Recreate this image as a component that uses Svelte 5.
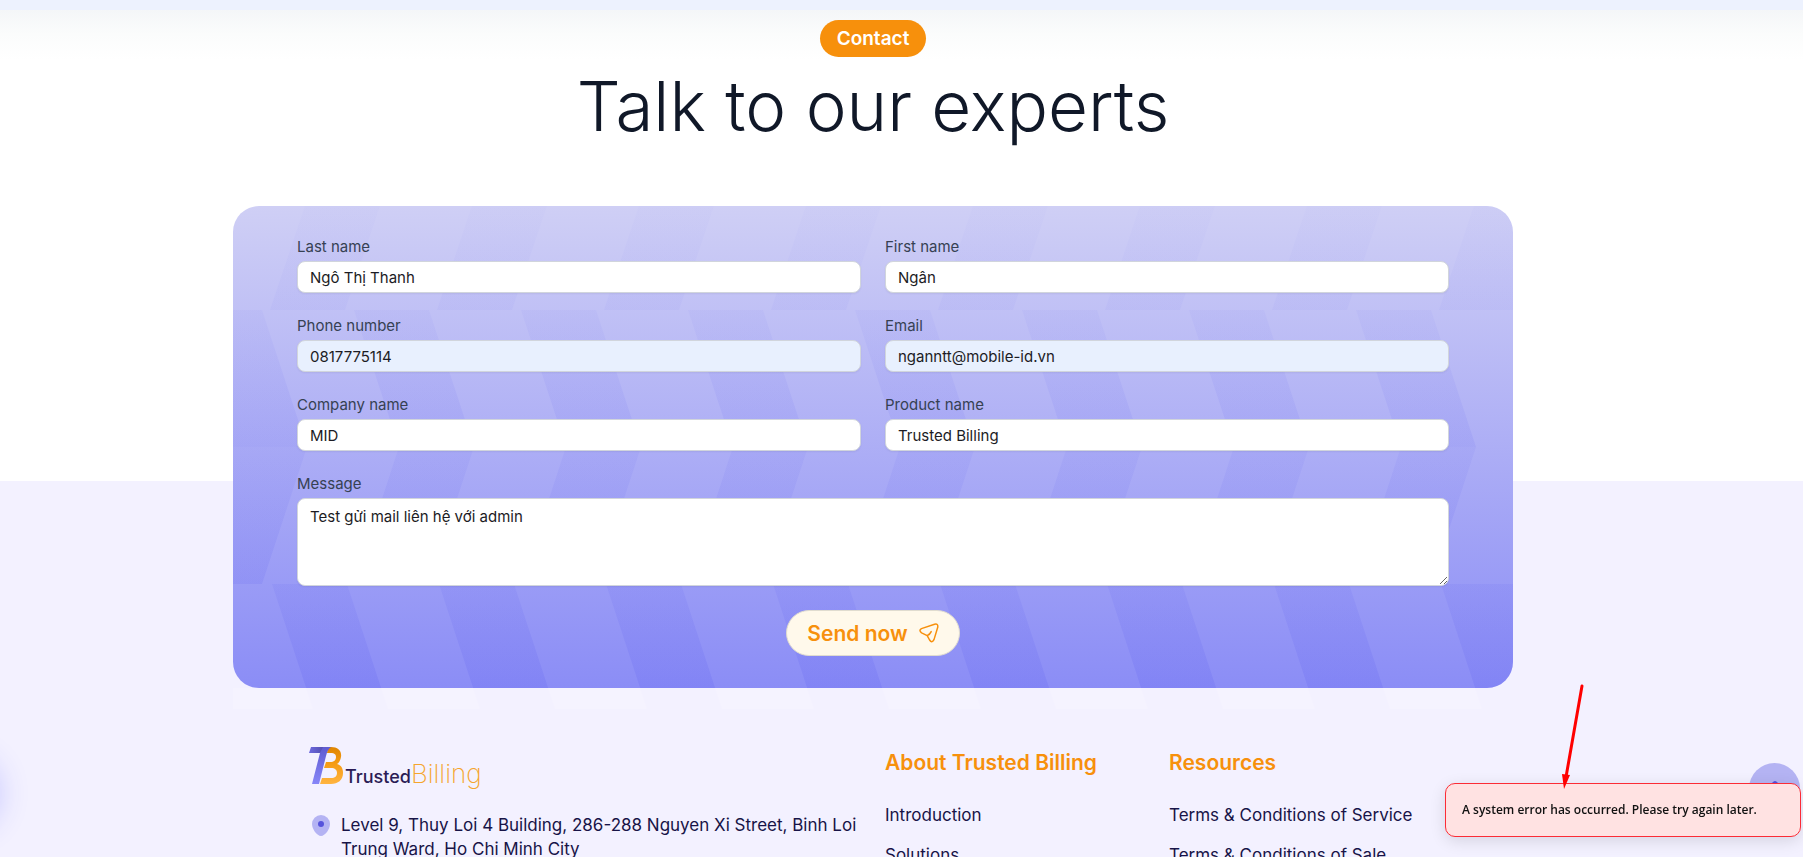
<script>
	let form = $state({
		lastName: 'Ngô Thị Thanh',
		firstName: 'Ngân',
		phone: '0817775114',
		email: 'nganntt@mobile-id.vn',
		company: 'MID',
		product: 'Trusted Billing',
		message: 'Test gửi mail liên hệ với admin'
	});

	let error = $state('A system error has occurred. Please try again later.');

	const fields = [
		{ key: 'lastName', label: 'Last name', type: 'text' },
		{ key: 'firstName', label: 'First name', type: 'text' },
		{ key: 'phone', label: 'Phone number', type: 'tel', filled: true },
		{ key: 'email', label: 'Email', type: 'email', filled: true },
		{ key: 'company', label: 'Company name', type: 'text' },
		{ key: 'product', label: 'Product name', type: 'text' }
	];

	const columns = [
		{ title: 'About Trusted Billing', links: ['Introduction', 'Solutions'] },
		{ title: 'Resources', links: ['Terms & Conditions of Service', 'Terms & Conditions of Sale'] }
	];

	// chevron bands behind the form: top edge, x of the first stripe at the top, lean, opacity range
	const bands = [
		{ y: -33, x: -84, lean: -46, from: 0.01, to: 0.05 },
		{ y: 104, x: -46, lean: 45, from: 0.05, to: 0.12 },
		{ y: 241, x: -1, lean: -45, from: 0.08, to: 0.16 },
		{ y: 378, x: -128, lean: 45, from: 0.12, to: 0.26 }
	];
	const stripes = [0, 1, 2, 3, 4, 5, 6, 7, 8, 9];

	function stripe(band, i) {
		const x = band.x + i * 167;
		const end = x + band.lean;
		return `${x},${band.y} ${x + 75},${band.y} ${end + 75},${band.y + 137} ${end},${band.y + 137}`;
	}

	function tail(i) {
		const x = i * 167 - 19;
		return `${x},0 ${x + 92},0 ${x + 99},21 ${x + 7},21`;
	}

	function handleSubmit(event) {
		event.preventDefault();
		error = 'A system error has occurred. Please try again later.';
	}
</script>

<div class="page">
	<main class="contact">
		<header class="intro">
			<span class="badge">Contact</span>
			<h1>Talk to our experts</h1>
		</header>

		<form class="card" onsubmit={handleSubmit}>
			<svg class="pattern" width="1280" height="483" viewBox="0 0 1280 483" aria-hidden="true">
				<defs>
					{#each bands as band, n}
						<linearGradient id="band-{n}" x1="0" y1="0" x2="0" y2="1">
							<stop offset="0" stop-color="#6466f1" stop-opacity={band.from} />
							<stop offset="1" stop-color="#6466f1" stop-opacity={band.to} />
						</linearGradient>
					{/each}
				</defs>
				{#each bands as band, n}
					{#each stripes as i}
						<polygon points={stripe(band, i)} fill="url(#band-{n})" />
					{/each}
				{/each}
			</svg>

			<div class="fields">
				{#each fields as field}
					<div class="field">
						<label for={field.key}>{field.label}</label>
						<input
							id={field.key}
							type={field.type}
							class:filled={field.filled}
							bind:value={form[field.key]}
						/>
					</div>
				{/each}
				<div class="field wide">
					<label for="message">Message</label>
					<textarea id="message" bind:value={form.message}></textarea>
				</div>
			</div>

			<button type="submit" class="send">
				Send now
				<svg width="20" height="20" viewBox="0 0 20 20" fill="none" aria-hidden="true">
					<path
						d="M2.400 5.600 15.600 1.300Q19.200 .4 18.800 4L15 16.600Q12.800 20.600 10.600 17L8.200 12.600 2.600 9.800Q-.6 7.400 2.400 5.600ZM8.200 12.600Q11 11.400 12.200 8.600"
						stroke="currentColor"
						stroke-width="1.500"
						stroke-linecap="round"
						stroke-linejoin="round"
					/>
				</svg>
			</button>
		</form>
	</main>

	<footer>
		<div class="glow"></div>
		<svg class="tails" viewBox="0 0 1280 21" preserveAspectRatio="xMinYMin slice" aria-hidden="true">
			{#each stripes as i}
				<polygon points={tail(i)} fill="#f5f3ff" />
			{/each}
		</svg>
		<div class="footer-grid">
			<div class="brand">
				<a class="logo" href="/" aria-label="Trusted Billing">
					<svg width="36" height="37" viewBox="0 0 36 37" aria-hidden="true">
						<defs>
							<linearGradient id="logo-t" x1="0" y1="0" x2="0" y2="1">
								<stop offset="0" stop-color="#5f5bd0" />
								<stop offset="1" stop-color="#8686f8" />
							</linearGradient>
							<linearGradient id="logo-bar" x1="0" y1="0" x2="1" y2="0">
								<stop offset="0" stop-color="#6d69df" />
								<stop offset="1" stop-color="#4d49a8" />
							</linearGradient>
							<linearGradient id="logo-b" x1="0" y1="0" x2="0" y2="1">
								<stop offset="0" stop-color="#df8500" />
								<stop offset="0.450" stop-color="#f59b14" />
								<stop offset="1" stop-color="#ffb440" />
							</linearGradient>
						</defs>
						<path
							d="M19 0H22C29 0 33 4 32 10 31.500 13 30 16 28 17 32 18 34 21 34 26 34 33 29 37 22 37H11L13 31H22C26 31 28 29 28 26 28 23 26 21 22 21H15L17 15H21C25 15 27 13 27 10 27 7 25 6 22 6H18Z"
							fill="url(#logo-b)"
						/>
						<path d="M2 0H17L15 6H0Z" fill="url(#logo-bar)" />
						<path d="M14 0H22C19 2 18 5 17 9L10 37H3L11 6Z" fill="url(#logo-t)" />
					</svg>
					<span class="wordmark"><span class="trusted">Trusted</span><span class="billing">Billing</span></span>
				</a>
				<address>
					<svg width="18" height="21" viewBox="0 0 18 21" aria-hidden="true">
						<path d="M9 0A9 9 0 0 1 18 9C18 14 13 21 9 21S0 14 0 9A9 9 0 0 1 9 0Z" fill="#b4b3f3" />
						<circle cx="9" cy="9" r="3" fill="#5653dc" />
					</svg>
					<span>Level 9, Thuy Loi 4 Building, 286-288 Nguyen Xi Street, Binh Loi<br />Trung Ward, Ho Chi Minh City</span>
				</address>
			</div>
			{#each columns as column}
				<nav>
					<h2>{column.title}</h2>
					<ul>
						{#each column.links as link}
							<li><a href="/">{link}</a></li>
						{/each}
					</ul>
				</nav>
			{/each}
		</div>
	</footer>
</div>

<button class="to-top" aria-label="Back to top">
	<svg width="18" height="18" viewBox="0 0 18 18" fill="none" aria-hidden="true">
		<path d="M9 17V3M2 9l7-6 7 6" stroke="#5653dc" stroke-width="4" stroke-linecap="round" stroke-linejoin="round" />
	</svg>
</button>

{#if error}
	<div class="toast" role="alert">{error}</div>
{/if}

<svg class="pointer" width="32" height="108" viewBox="0 0 32 108" aria-hidden="true">
	<path d="M24 3 8 94" stroke="#ff0000" stroke-width="3" stroke-linecap="round" />
	<path d="M4 91 12 92 6 106Z" fill="#ff0000" />
</svg>

<style>
	:global(html) {
		scrollbar-width: none;
	}

	:global(body) {
		margin: 0;
	}

	.page {
		overflow: hidden;
		font-family: Inter, 'Open Sans', sans-serif;
		color: #101828;
	}

	.contact {
		box-sizing: border-box;
		padding: 20px 57px 0 0;
		background: linear-gradient(#edf2fe 10px, #f4f6f8 10px, #fbfcfc 34px, #ffffff 60px);
	}

	.intro {
		display: flex;
		flex-direction: column;
		align-items: center;
	}

	.badge {
		padding: 0 17px;
		border-radius: 19px;
		background: #f7900c;
		color: #ffffff;
		font-size: 19px;
		font-weight: 600;
		line-height: 37px;
	}

	h1 {
		margin: 9px 0 60px;
		font-size: 69px;
		font-weight: 300;
		line-height: 80px;
	}

	.card {
		position: relative;
		z-index: 1;
		box-sizing: border-box;
		display: flex;
		flex-direction: column;
		align-items: center;
		gap: 24px;
		max-width: 1280px;
		margin: 0 auto -207px;
		padding: 31px 64px 32px;
		overflow: hidden;
		border-radius: 26px;
		background: linear-gradient(#cfcff5, #8b8df6);
	}

	.pattern {
		position: absolute;
		top: 0;
		left: 0;
	}

	.fields {
		position: relative;
		display: grid;
		grid-template-columns: 1fr 1fr;
		gap: 23px 24px;
		width: 100%;
	}

	.field {
		display: flex;
		flex-direction: column;
		gap: 4px;
	}

	.wide {
		grid-column: 1 / -1;
	}

	label {
		color: #364153;
		font-size: 15px;
		line-height: 20px;
	}

	input,
	textarea {
		box-sizing: border-box;
		width: 100%;
		margin: 0;
		padding: 0 12px;
		border: 1px solid #d1d5dc;
		border-radius: 8px;
		background: #ffffff;
		box-shadow: 0 1px 2px rgba(0, 0, 0, 0.06);
		color: #1c1c24;
		font-family: inherit;
		font-size: 15px;
		line-height: 20px;
	}

	input {
		height: 32px;
	}

	textarea {
		display: block;
		height: 88px;
		padding: 8px 12px;
	}

	.filled {
		background: #e8f0fe;
	}

	.send {
		position: relative;
		display: flex;
		align-items: center;
		gap: 11px;
		height: 46px;
		padding: 0 20px;
		border: 1px solid #e0dccf;
		border-radius: 23px;
		background: #fff9eb;
		color: #f7900c;
		font-family: inherit;
		font-size: 21px;
		font-weight: 600;
	}

	footer {
		position: relative;
		padding: 207px 57px 40px 0;
		background: #f3f1ff;
	}

	.glow {
		position: absolute;
		top: 280px;
		left: -70px;
		width: 64px;
		height: 64px;
		border-radius: 50%;
		box-shadow: 0 0 32px 4px #c0c0ff;
	}

	.tails {
		display: block;
		width: 100%;
		max-width: 1280px;
		height: 21px;
		margin: 0 auto;
	}

	.footer-grid {
		display: grid;
		grid-template-columns: 552px 260px 1fr;
		column-gap: 24px;
		box-sizing: border-box;
		max-width: 1128px;
		margin: 38px auto 0;
	}

	.logo {
		display: flex;
		height: 42px;
		text-decoration: none;
	}

	.wordmark {
		display: flex;
		align-items: baseline;
		padding-top: 12px;
		line-height: 30px;
	}

	.trusted {
		color: #2b1c55;
		font-size: 18px;
		font-weight: 500;
	}

	.billing {
		color: #f5a52d;
		font-size: 26px;
		font-weight: 200;
	}

	address {
		display: flex;
		gap: 11px;
		margin: 24px 0 0 3px;
		font-size: 17px;
		font-style: normal;
		line-height: 24px;
		color: #181447;
		white-space: nowrap;
	}

	address svg {
		flex: none;
		margin-top: 2px;
	}

	h2 {
		margin: 0;
		color: #f7900c;
		font-size: 21px;
		font-weight: 600;
		line-height: 32px;
		white-space: nowrap;
	}

	ul {
		display: flex;
		flex-direction: column;
		gap: 16px;
		margin: 24px 0 0;
		padding: 0;
		list-style: none;
		line-height: 24px;
	}

	li a {
		color: #181447;
		font-size: 17px;
		text-decoration: none;
		white-space: nowrap;
	}

	.to-top {
		position: fixed;
		right: 3px;
		bottom: 43px;
		display: flex;
		justify-content: center;
		width: 51px;
		height: 51px;
		padding: 17px 0 0;
		border: none;
		border-radius: 50%;
		background: #b4b3f3;
	}

	.toast {
		position: fixed;
		right: 2px;
		bottom: 20px;
		box-sizing: border-box;
		width: 356px;
		padding: 16px;
		border: 1px solid #fb2c36;
		border-radius: 10px;
		background: #ffe2e2;
		box-shadow: 0 4px 16px rgba(0, 0, 0, 0.12);
		color: #111111;
		font-family: 'Open Sans', sans-serif;
		font-size: 12px;
		font-weight: 600;
		line-height: 20px;
	}

	.pointer {
		position: fixed;
		right: 213px;
		bottom: 66px;
	}
</style>
